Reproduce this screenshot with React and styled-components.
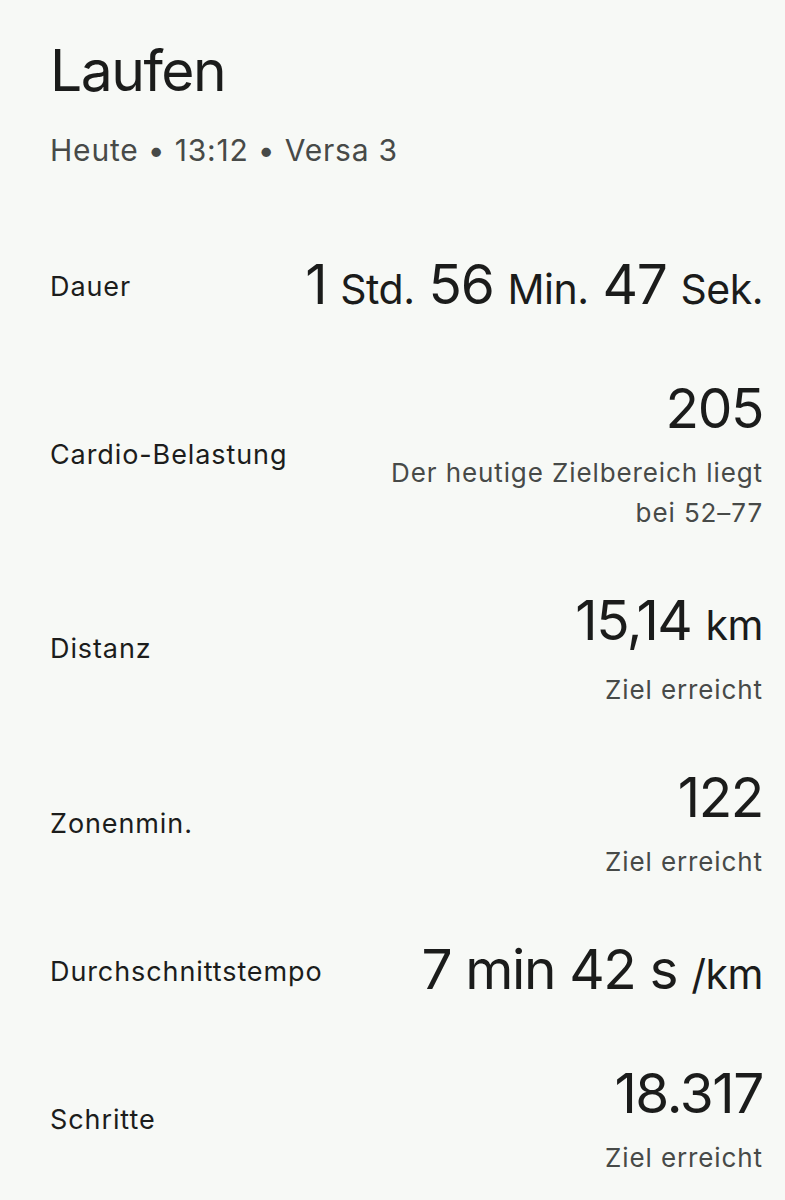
import React from "react";
import styled, { createGlobalStyle } from "styled-components";

const GlobalStyle = createGlobalStyle`
  html, body {
    margin: 0;
    padding: 0;
    background-color: #f7f9f6;
  }
  body {
    font-family: Inter, Roboto, "Noto Sans", "Liberation Sans", sans-serif;
    color: #1c1d1c;
  }
`;

const Page = styled.div`
  display: flex;
  flex-direction: column;
  min-height: 1200px;
  padding: 36px 22px 0 50px;
  box-sizing: border-box;
  background-color: #f7f9f6;
`;

const Title = styled.h1`
  margin: 0;
  font-size: 57px;
  line-height: 70px;
  font-weight: 400;
  letter-spacing: -1.5px;
  color: #1b1c1b;
`;

const Subtitle = styled.div`
  margin-top: 24px;
  font-size: 30px;
  line-height: 40px;
  letter-spacing: 0.8px;
  color: #474a48;
`;

const Stats = styled.div`
  display: flex;
  flex-direction: column;
  gap: 55px;
  margin-top: 82px;
`;

const Row = styled.div`
  display: flex;
  flex-direction: row;
  justify-content: space-between;
  align-items: center;
`;

const Label = styled.div`
  font-size: 27px;
  line-height: 36px;
  letter-spacing: 0.9px;
  color: #1c1d1c;
  white-space: nowrap;
`;

const ValueBlock = styled.div`
  display: flex;
  flex-direction: column;
  align-items: flex-end;
  text-align: right;
`;

const Value = styled.div`
  font-size: 55px;
  line-height: 64px;
  letter-spacing: -1.4px;
  color: #1b1c1b;
  white-space: nowrap;
`;

const Part = styled.span`
  font-size: ${({ small }) => (small ? "41px" : "55px")};
  letter-spacing: ${({ small }) => (small ? "-0.5px" : "-1.4px")};
`;

const Note = styled.div`
  margin-top: 13px;
  font-size: 26px;
  line-height: 40px;
  letter-spacing: 0.9px;
  color: #474a48;
`;

const stats = [
  {
    label: "Dauer",
    parts: [["1"], ["Std.", true], ["56"], ["Min.", true], ["47"], ["Sek.", true]],
  },
  {
    label: "Cardio-Belastung",
    parts: [["205"]],
    note: ["Der heutige Zielbereich liegt", "bei 52–77"],
  },
  {
    label: "Distanz",
    parts: [["15,14"], ["km", true]],
    note: ["Ziel erreicht"],
  },
  {
    label: "Zonenmin.",
    parts: [["122"]],
    note: ["Ziel erreicht"],
  },
  {
    label: "Durchschnittstempo",
    parts: [["7"], ["min"], ["42"], ["s"], ["/km", true]],
  },
  {
    label: "Schritte",
    parts: [["18.317"]],
    note: ["Ziel erreicht"],
  },
];

const StatRow = ({ label, parts, note }) => (
  <Row>
    <Label>{label}</Label>
    <ValueBlock>
      <Value>
        {parts.map(([text, small], i) => (
          <React.Fragment key={i}>
            {i > 0 && " "}
            <Part small={small}>{text}</Part>
          </React.Fragment>
        ))}
      </Value>
      {note && (
        <Note>
          {note.map((line, i) => (
            <React.Fragment key={i}>
              {i > 0 && <br />}
              {line}
            </React.Fragment>
          ))}
        </Note>
      )}
    </ValueBlock>
  </Row>
);

const App = () => {
  return (
    <>
      <GlobalStyle />
      <Page>
        <Title>Laufen</Title>
        <Subtitle>Heute • 13:12 • Versa 3</Subtitle>
        <Stats>
          {stats.map((s) => (
            <StatRow key={s.label} {...s} />
          ))}
        </Stats>
      </Page>
    </>
  );
};

export default App;
